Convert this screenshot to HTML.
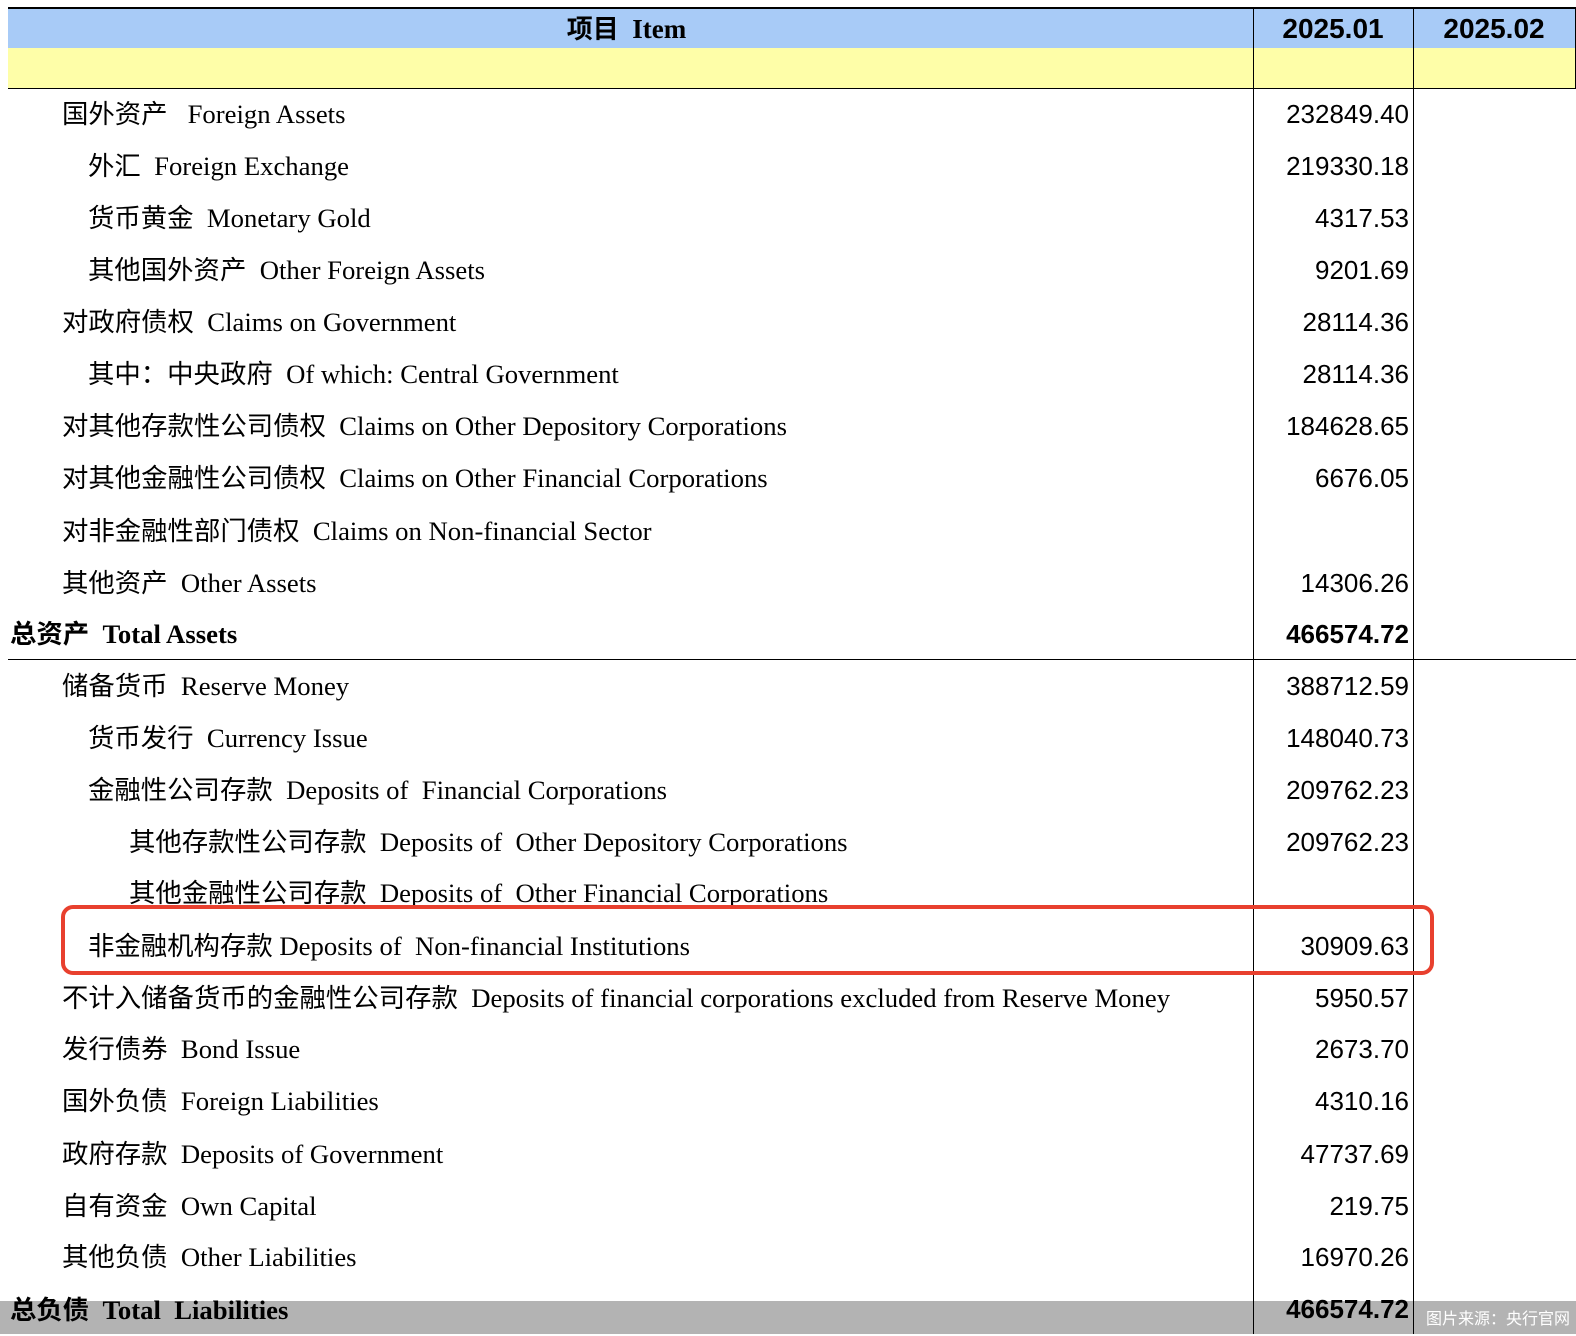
<!DOCTYPE html>
<html><head><meta charset="utf-8">
<style>
body{margin:0;width:1576px;height:1334px;background:#fff;position:relative;overflow:hidden;font-family:"Liberation Serif","Noto Serif CJK SC",serif;color:#000}
.a{position:absolute}
.r{position:absolute;height:52px;line-height:52px;font-size:26.7px;white-space:nowrap;margin-top:-2px}
.r .c{font-family:"Noto Sans CJK SC","WenQuanYi Zen Hei",sans-serif;font-size:26.4px}
.n{position:absolute;height:52px;line-height:52px;font-size:26px;font-family:"Liberation Sans",Arial,sans-serif;right:167px;text-align:right;white-space:nowrap}
.h{position:absolute;top:8px;height:42px;font:bold 28px 'Liberation Sans',Arial,sans-serif;line-height:42px;text-align:center}
</style></head><body>
<div class="a" style="left:8px;top:8px;width:1568px;height:40px;background:#a8cbf7"></div>
<div class="a" style="left:8px;top:48px;width:1568px;height:40px;background:#fefea8"></div>
<div class="a" style="left:8px;top:7px;width:1568px;height:2px;background:#000"></div>
<div class="a" style="left:8px;top:88px;width:1568px;height:1px;background:#000"></div>
<div class="a" style="left:8px;top:659px;width:1568px;height:1px;background:#000"></div>
<div class="a" style="left:0;top:1301px;width:1576px;height:33px;background:#b3b3b3"></div>
<div class="a" style="left:1253px;top:8px;width:1px;height:1326px;background:#000"></div>
<div class="a" style="left:1413px;top:8px;width:1px;height:1326px;background:#000"></div>
<div class="a" style="left:1575px;top:8px;width:1px;height:80px;background:#000"></div>

<div class="r" style="left:0;width:1253px;top:4px;line-height:52px;text-align:center;font-weight:bold;font-size:27px"><span class="c" style="font-weight:bold;font-size:26px">项目</span>&nbsp; Item</div>
<div class="h" style="left:1253px;width:160px">2025.01</div>
<div class="h" style="left:1413px;width:162px">2025.02</div>

<div class="r" style="left:62px;top:88px"><span class="c">国外资产</span>&nbsp;&nbsp; Foreign Assets</div><div class="n" style="top:88px">232849.40</div>
<div class="r" style="left:88px;top:140px"><span class="c">外汇</span>&nbsp; Foreign Exchange</div><div class="n" style="top:140px">219330.18</div>
<div class="r" style="left:88px;top:192px"><span class="c">货币黄金</span>&nbsp; Monetary Gold</div><div class="n" style="top:192px">4317.53</div>
<div class="r" style="left:88px;top:244px"><span class="c">其他国外资产</span>&nbsp; Other Foreign Assets</div><div class="n" style="top:244px">9201.69</div>
<div class="r" style="left:62px;top:296px"><span class="c">对政府债权</span>&nbsp; Claims on Government</div><div class="n" style="top:296px">28114.36</div>
<div class="r" style="left:88px;top:348px"><span class="c">其中：中央政府</span>&nbsp; Of which: Central Government</div><div class="n" style="top:348px">28114.36</div>
<div class="r" style="left:62px;top:400px"><span class="c">对其他存款性公司债权</span>&nbsp; Claims on Other Depository Corporations</div><div class="n" style="top:400px">184628.65</div>
<div class="r" style="left:62px;top:452px"><span class="c">对其他金融性公司债权</span>&nbsp; Claims on Other Financial Corporations</div><div class="n" style="top:452px">6676.05</div>
<div class="r" style="left:62px;top:505px"><span class="c">对非金融性部门债权</span>&nbsp; Claims on Non-financial Sector</div>
<div class="r" style="left:62px;top:557px"><span class="c">其他资产</span>&nbsp; Other Assets</div><div class="n" style="top:557px">14306.26</div>
<div class="r" style="left:10px;top:608px;font-weight:bold"><span class="c" style="font-weight:bold">总资产</span>&nbsp; Total Assets</div><div class="n" style="top:608px;font-weight:bold">466574.72</div>

<div class="r" style="left:62px;top:660px"><span class="c">储备货币</span>&nbsp; Reserve Money</div><div class="n" style="top:660px">388712.59</div>
<div class="r" style="left:88px;top:712px"><span class="c">货币发行</span>&nbsp; Currency Issue</div><div class="n" style="top:712px">148040.73</div>
<div class="r" style="left:88px;top:764px"><span class="c">金融性公司存款</span>&nbsp; Deposits of&nbsp; Financial Corporations</div><div class="n" style="top:764px">209762.23</div>
<div class="r" style="left:129px;top:816px"><span class="c">其他存款性公司存款</span>&nbsp; Deposits of&nbsp; Other Depository Corporations</div><div class="n" style="top:816px">209762.23</div>
<div class="r" style="left:129px;top:867px"><span class="c">其他金融性公司存款</span>&nbsp; Deposits of&nbsp; Other Financial Corporations</div>
<div class="r" style="left:88px;top:920px"><span class="c">非金融机构存款</span> Deposits of&nbsp; Non-financial Institutions</div><div class="n" style="top:920px">30909.63</div>
<div class="r" style="left:62px;top:972px"><span class="c">不计入储备货币的金融性公司存款</span>&nbsp; Deposits of financial corporations excluded from Reserve Money</div><div class="n" style="top:972px">5950.57</div>
<div class="r" style="left:62px;top:1023px"><span class="c">发行债券</span>&nbsp; Bond Issue</div><div class="n" style="top:1023px">2673.70</div>
<div class="r" style="left:62px;top:1075px"><span class="c">国外负债</span>&nbsp; Foreign Liabilities</div><div class="n" style="top:1075px">4310.16</div>
<div class="r" style="left:62px;top:1128px"><span class="c">政府存款</span>&nbsp; Deposits of Government</div><div class="n" style="top:1128px">47737.69</div>
<div class="r" style="left:62px;top:1180px"><span class="c">自有资金</span>&nbsp; Own Capital</div><div class="n" style="top:1180px">219.75</div>
<div class="r" style="left:62px;top:1231px"><span class="c">其他负债</span>&nbsp; Other Liabilities</div><div class="n" style="top:1231px">16970.26</div>
<div class="r" style="left:10px;top:1284px;font-weight:bold"><span class="c" style="font-weight:bold">总负债</span>&nbsp; Total&nbsp; Liabilities</div><div class="n" style="top:1283px;font-weight:bold">466574.72</div>
<div class="a" style="left:1426px;top:1305px;height:22px;line-height:22px;font:16px 'Noto Sans CJK SC',sans-serif;color:#fff">图片来源：央行官网</div>

<div class="a" style="left:61px;top:905px;width:1365px;height:62px;border:4px solid #e8402e;border-radius:12px"></div>
</body></html>
